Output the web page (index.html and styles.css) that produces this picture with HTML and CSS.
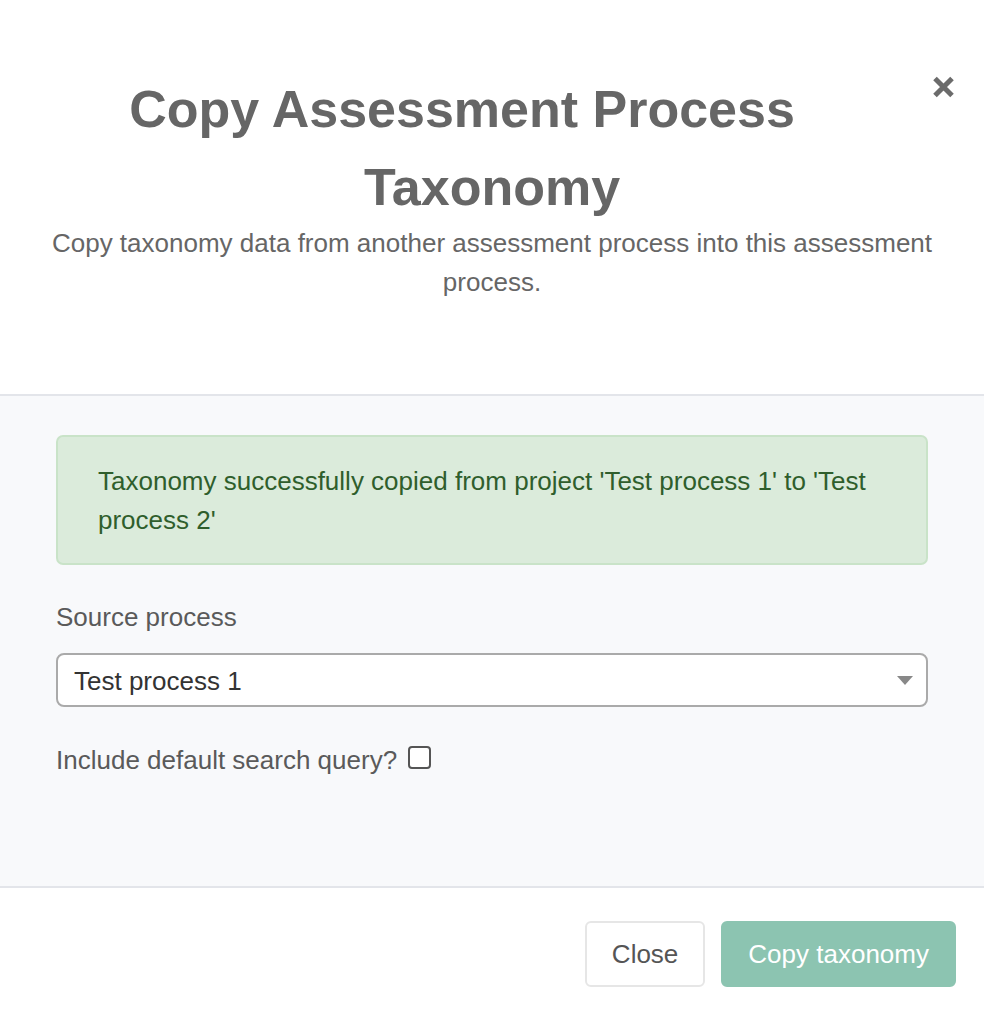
FILE: index.html
```html
<!DOCTYPE html>
<html lang="en">
<head>
<meta charset="utf-8">
<title>Copy Assessment Process Taxonomy</title>
<link rel="stylesheet" href="styles.css">
</head>
<body>
<div class="modal">
  <header class="modal-header">
    <h1 class="modal-title">
      <button class="close" type="button" aria-label="Close">
        <svg width="23" height="22" viewBox="0 0 23 22"><path d="M3 2.5 L20 19.5 M20 2.5 L3 19.5" stroke="#6b6b6b" stroke-width="5" fill="none"/></svg>
      </button>Copy Assessment Process Taxonomy</h1>
    <p class="modal-sub">Copy taxonomy data from another assessment process into this assessment process.</p>
  </header>
  <section class="modal-body">
    <div class="alert">Taxonomy successfully copied from project 'Test process 1' to 'Test process 2'</div>
    <label class="field-label">Source process</label>
    <div class="select">
      <span class="select-value">Test process 1</span>
      <span class="select-arrow"></span>
    </div>
    <div class="check-row">
      <span>Include default search query?</span>
      <span class="checkbox"></span>
    </div>
  </section>
  <footer class="modal-footer">
    <button class="btn btn-close" type="button">Close</button>
    <button class="btn btn-primary" type="button">Copy taxonomy</button>
  </footer>
</div>
</body>
</html>
```
FILE: styles.css
```css
* { box-sizing: border-box; }
html, body { margin: 0; padding: 0; background: #fff; }
body {
  font-family: "Liberation Sans", Arial, Helvetica, sans-serif;
  font-size: 26px;
  line-height: 39px;
  color: #555;
}
.modal { width: 984px; }
.modal-header {
  padding: 70px 48px 92px;
  border-bottom: 2px solid #e3e5ea;
  text-align: center;
}
.modal-title {
  margin: 0;
  font-size: 52px;
  line-height: 78px;
  font-weight: bold;
  color: #666;
}
.close {
  float: right;
  width: 79px;
  height: 60px;
  margin-right: -19px;
  padding: 6px 0 0;
  border: 0;
  background: none;
  display: flex;
  justify-content: flex-end;
  align-items: flex-start;
  cursor: pointer;
}
.modal-sub {
  margin: -2px 0 0;
  color: #666;
}
.modal-body {
  background: #f8f9fb;
  padding: 39px 56px 0;
  height: 490px;
}
.alert {
  background: #dbebdb;
  border: 2px solid #c9e3c8;
  border-radius: 7px;
  padding: 25px 40px 23px;
  color: #2f5e2c;
}
.field-label {
  display: block;
  margin-top: 33px;
  color: #5a5a5a;
}
.select {
  margin-top: 16px;
  height: 54px;
  background: #fff;
  border: 2px solid #aaa;
  border-radius: 8px;
  display: flex;
  align-items: center;
  justify-content: space-between;
  padding: 3px 13px 0 16px;
  color: #333;
}
.select-arrow {
  width: 0;
  height: 0;
  border-left: 8px solid transparent;
  border-right: 8px solid transparent;
  border-top: 9px solid #888;
  margin-top: -3px;
}
.check-row {
  margin-top: 34px;
  display: flex;
  align-items: center;
  gap: 11px;
  color: #5a5a5a;
}
.checkbox {
  width: 23px;
  height: 23px;
  border: 2px solid #555;
  border-radius: 4px;
  background: #fff;
  margin-top: -6px;
}
.modal-footer {
  border-top: 2px solid #e3e5ea;
  padding: 33px 28px 31px;
  display: flex;
  justify-content: flex-end;
  gap: 16px;
}
.btn {
  height: 66px;
  padding: 0 25px;
  border-radius: 6px;
  font-family: inherit;
  font-size: 26px;
  border: 2px solid transparent;
}
.btn-close {
  background: #fff;
  border-color: #e6e6e6;
  color: #555;
}
.btn-primary {
  background: #8cc4b1;
  border-color: #8cc4b1;
  color: #fff;
}
```
